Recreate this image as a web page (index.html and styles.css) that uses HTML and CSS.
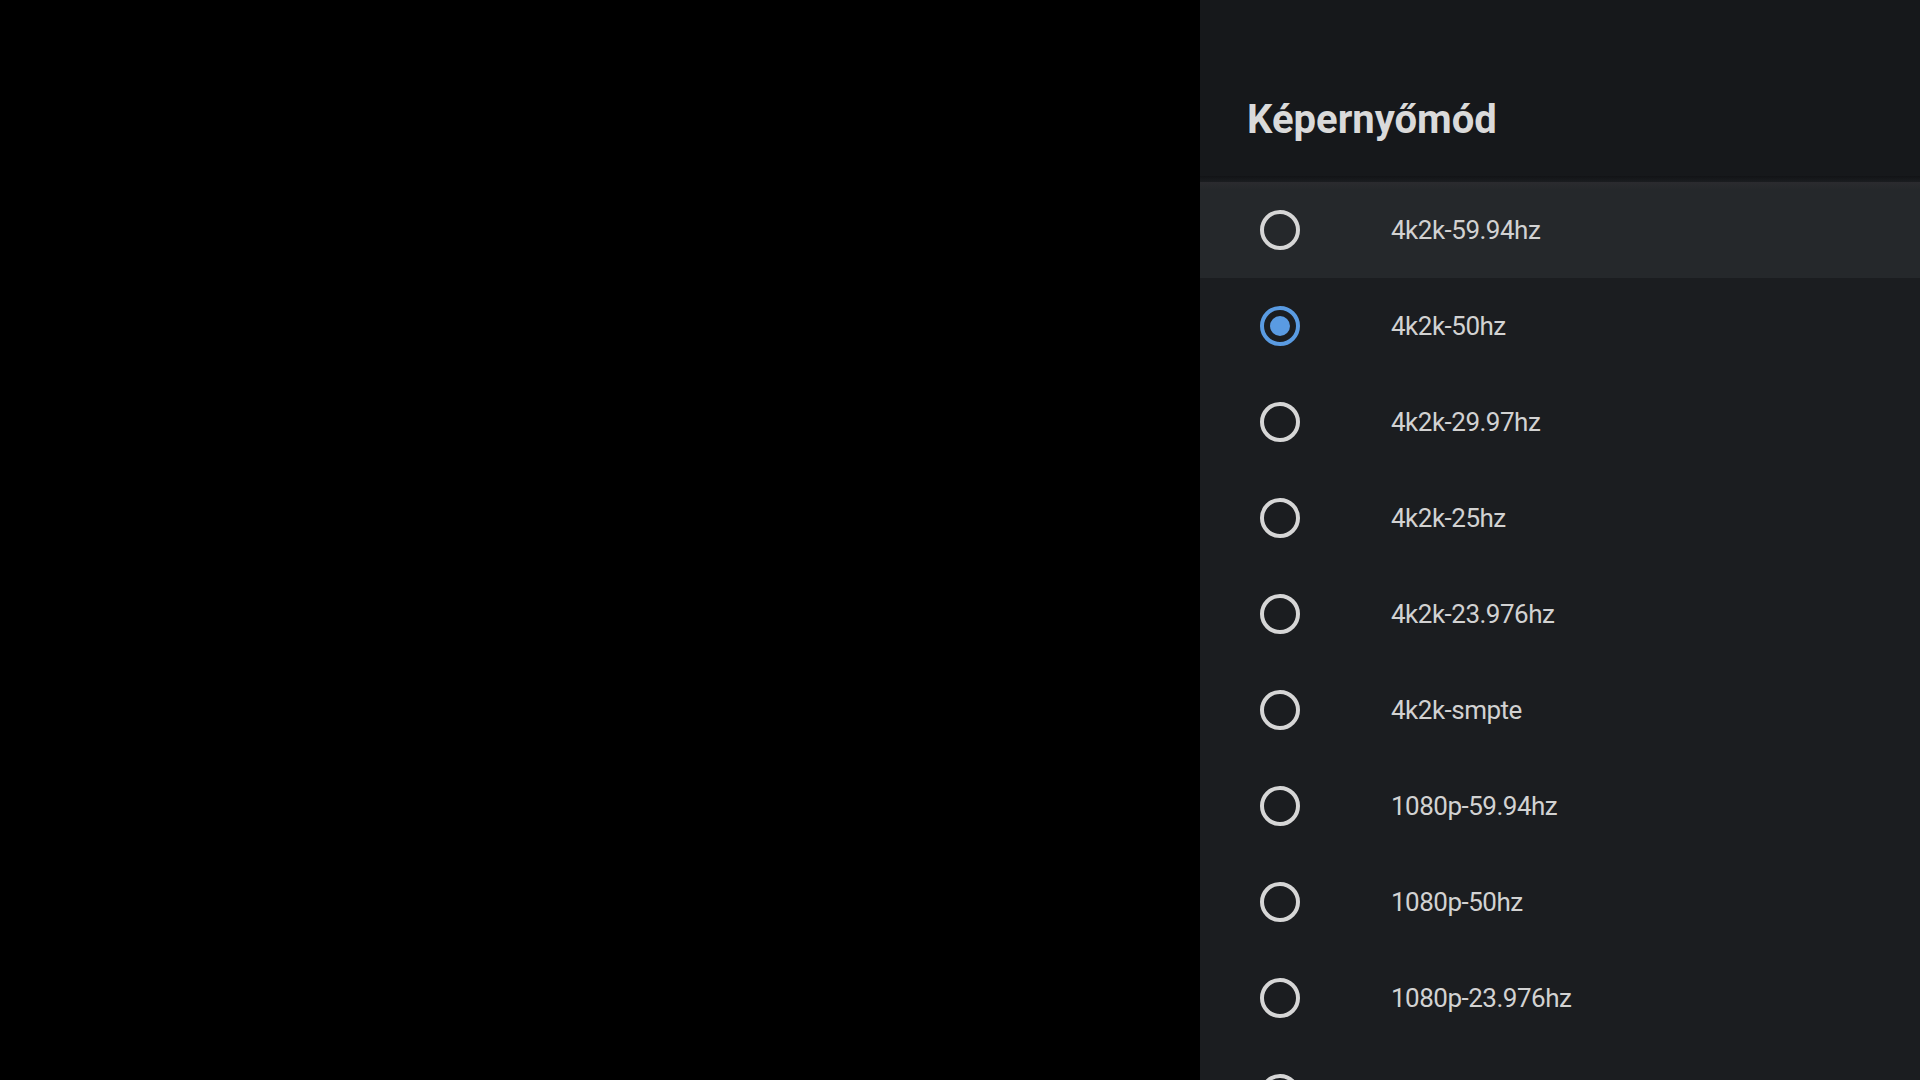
FILE: index.html
```html
<!DOCTYPE html>
<html lang="hu">
<head>
<meta charset="utf-8">
<title>Képernyőmód</title>
<link rel="stylesheet" href="styles.css">
</head>
<body>
<div class="screen">
  <div class="backdrop"></div>
  <aside class="panel">
    <header class="panel-header">
      <h1 class="panel-title">Képernyőmód</h1>
    </header>
    <ul class="options">
      <li class="option focused"><span class="radio"></span><span class="label">4k2k-59.94hz</span></li>
      <li class="option"><span class="radio checked"></span><span class="label">4k2k-50hz</span></li>
      <li class="option"><span class="radio"></span><span class="label">4k2k-29.97hz</span></li>
      <li class="option"><span class="radio"></span><span class="label">4k2k-25hz</span></li>
      <li class="option"><span class="radio"></span><span class="label">4k2k-23.976hz</span></li>
      <li class="option"><span class="radio"></span><span class="label">4k2k-smpte</span></li>
      <li class="option"><span class="radio"></span><span class="label">1080p-59.94hz</span></li>
      <li class="option"><span class="radio"></span><span class="label">1080p-50hz</span></li>
      <li class="option"><span class="radio"></span><span class="label">1080p-23.976hz</span></li>
      <li class="option"><span class="radio"></span></li>
    </ul>
  </aside>
</div>
</body>
</html>
```

FILE: styles.css
```css
html, body {
  margin: 0;
  padding: 0;
  background: #000;
  height: 1080px;
  overflow: hidden;
}

.screen {
  display: flex;
  width: 1920px;
  height: 1080px;
  font-family: Roboto, "Noto Sans", sans-serif;
}

.backdrop {
  flex: 1;
  background: #000;
}

.panel {
  width: 720px;
  height: 1080px;
  background: #1b1d20;
  display: flex;
  flex-direction: column;
  overflow: hidden;
}

.panel-header {
  height: 176px;
  box-sizing: border-box;
  padding: 96px 0 0 47px;
  background: #16181b;
  flex: none;
}

.panel-title {
  margin: 0;
  font-size: 40px;
  line-height: 48px;
  font-weight: 700;
  color: #dadada;
}

.options {
  list-style: none;
  margin: 0;
  padding: 6px 0 0 0;
  background: linear-gradient(#121316, #1b1d20 6px);
  flex: 1;
}

.option {
  height: 96px;
  display: flex;
  align-items: center;
  padding-left: 60px;
}

.option.focused {
  background: linear-gradient(#2b2b2f, #25282b 8px);
}

.radio {
  box-sizing: border-box;
  width: 40px;
  height: 40px;
  border: 4px solid #d6d6d6;
  border-radius: 50%;
  flex: none;
  display: flex;
  align-items: center;
  justify-content: center;
}

.radio.checked {
  border-color: #5a9be2;
}

.radio.checked::after {
  content: "";
  width: 20px;
  height: 20px;
  border-radius: 50%;
  background: #5a9be2;
}

.label {
  margin-left: 91px;
  font-size: 26px;
  letter-spacing: -0.5px;
  color: #d2d2d2;
}
```
